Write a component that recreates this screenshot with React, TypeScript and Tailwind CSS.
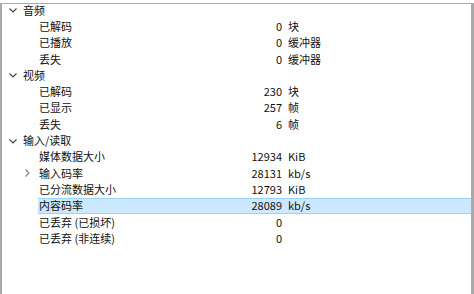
import React from "react";

type Row = {
  label: string;
  level: 0 | 1;
  value?: string;
  unit?: string;
  toggle?: "down" | "right";
  selected?: boolean;
};

const rows: Row[] = [
  { label: "音频", level: 0, toggle: "down" },
  { label: "已解码", level: 1, value: "0", unit: "块" },
  { label: "已播放", level: 1, value: "0", unit: "缓冲器" },
  { label: "丢失", level: 1, value: "0", unit: "缓冲器" },
  { label: "视频", level: 0, toggle: "down" },
  { label: "已解码", level: 1, value: "230", unit: "块" },
  { label: "已显示", level: 1, value: "257", unit: "帧" },
  { label: "丢失", level: 1, value: "6", unit: "帧" },
  { label: "输入/读取", level: 0, toggle: "down" },
  { label: "媒体数据大小", level: 1, value: "12934", unit: "KiB" },
  { label: "输入码率", level: 1, value: "28131", unit: "kb/s", toggle: "right" },
  { label: "已分流数据大小", level: 1, value: "12793", unit: "KiB" },
  { label: "内容码率", level: 1, value: "28089", unit: "kb/s", selected: true },
  { label: "已丢弃 (已损坏)", level: 1, value: "0" },
  { label: "已丢弃 (非连续)", level: 1, value: "0" },
];

const Chevron = ({ dir }: { dir: "down" | "right" }) => (
  <svg width="8" height="8" viewBox="0 0 8 8" className="block">
    {dir === "down" ? (
      <polyline points="0.5,2.5 4,6 7.5,2.5" fill="none" stroke="#404040" strokeWidth="1.1" />
    ) : (
      <polyline points="2.5,0.5 6,4 2.5,7.5" fill="none" stroke="#808080" strokeWidth="1.1" />
    )}
  </svg>
);

const TreeRow = ({ row }: { row: Row }) => {
  const isTop = row.level === 0;
  return (
    <div className="flex h-[16.3px] items-center">
      <div className={`flex h-full items-center justify-center ${isTop ? "w-[21px] pl-px" : "w-[36px] pl-[14px]"}`}>
        {row.toggle && <Chevron dir={row.toggle} />}
      </div>
      <div
        className={`flex h-full flex-1 items-center ${
          row.selected ? "border-y border-[#99d1ff] bg-[#cce8ff]" : "border-y border-transparent"
        }`}
      >
        <div className={`flex items-center ${isTop ? "w-[259px]" : "w-[244px]"}`}>
          <span className={isTop ? "" : "pl-px"}>{row.label}</span>
          {row.value && <span className="ml-auto">{row.value}</span>}
        </div>
        {row.unit && <span className="pl-[6px]">{row.unit}</span>}
      </div>
    </div>
  );
};

export default function App() {
  return (
    <div className="h-[294px] w-[474px] overflow-hidden bg-white pt-[3px]">
      <div
        className="h-[291px] border-l-[2px] border-r-[3px] border-t border-[#a9a9a9] bg-white text-[11px] leading-none text-[#111]"
        style={{ fontFamily: '"Noto Sans CJK SC", "Noto Sans", sans-serif' }}
      >
        <div className="-mt-[2px]">
          {rows.map((row, i) => (
            <TreeRow key={i} row={row} />
          ))}
        </div>
      </div>
    </div>
  );
}
